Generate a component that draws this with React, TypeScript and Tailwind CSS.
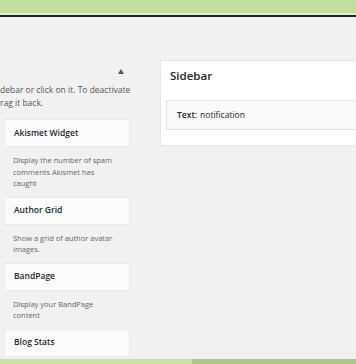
const widgets = [
  {
    name: "Akismet Widget",
    desc: ["Display the number of spam", "comments Akismet has", "caught"],
  },
  { name: "Author Grid", desc: ["Show a grid of author avatar", "images."] },
  { name: "BandPage", desc: ["Display your BandPage", "content"] },
  { name: "Blog Stats", desc: [] },
];

const App = () => {
  return (
    <div
      className="w-[356px] h-[364px] bg-[#f1f1f1] overflow-hidden flex flex-col"
      style={{ fontFamily: '"Open Sans", "Noto Sans", sans-serif' }}
    >
      {/* top bar */}
      <div className="h-[13px] bg-[#c3df9d] shrink-0" />
      <div className="h-[2px] bg-[#e2ecd8] shrink-0" />
      <div className="h-[2px] bg-[#1f2420] shrink-0" />

      <div className="flex-1 flex overflow-hidden">
        {/* available widgets */}
        <div className="w-[131px] shrink-0 pt-[51px]">
          <div className="flex justify-end pr-[7px] h-[6px] items-center">
            <span className="block w-0 h-0 border-l-[3px] border-r-[3px] border-b-[5px] border-l-transparent border-r-transparent border-b-[#555]" />
          </div>
          <div className="mt-[9px] text-[8.5px] leading-[13px] text-[#555] whitespace-nowrap">
            <div>debar or click on it. To deactivate</div>
            <div>rag it back.</div>
          </div>

          <div className="mt-[10px] ml-[4px] w-[126px]">
            {widgets.map((w, index) => (
              <div key={`keyWidget${index}`}>
                <div className="h-[28px] flex items-center pl-[9px] bg-[#fbfbfb] border border-[#ebebeb] text-[8.5px] font-semibold text-[#23282d]">
                  {w.name}
                </div>
                {w.desc.length > 0 && (
                  <div className="pt-[8px] pb-[7px] pl-[9px] text-[7.5px] leading-[11.5px] text-[#666]">
                    {w.desc.map((line, i) => (
                      <div key={`keyDesc${i}`}>{line}</div>
                    ))}
                  </div>
                )}
              </div>
            ))}
          </div>
        </div>

        {/* sidebar area */}
        <div className="flex-1 pl-[29px] pt-[43px]">
          <div className="bg-white border-y border-l border-[#e5e5e5] pb-[15px]">
            <div className="h-[30px] flex items-center pl-[9px] text-[11.5px] font-semibold text-[#23282d]">
              Sidebar
            </div>
            <div className="mt-[9px] ml-[5px] h-[30px] flex items-center pl-[10px] bg-[#fafafa] border-y border-l border-[#e2e2e2] text-[8.5px] text-[#23282d]">
              <span className="font-semibold">Text:</span>
              <span className="ml-[3px]">notification</span>
            </div>
          </div>
        </div>
      </div>

      {/* bottom bar */}
      <div className="h-[5px] shrink-0 flex">
        <div className="w-[192px] bg-[#c8e2a8]" />
        <div className="flex-1 bg-[#abc98f]" />
      </div>
    </div>
  );
};

export default App;
